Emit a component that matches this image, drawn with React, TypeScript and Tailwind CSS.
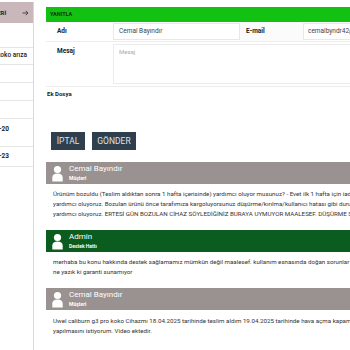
import React from "react";

function UserIcon() {
  return (
    <svg width="11" height="17" viewBox="0 0 11 17" className="shrink-0">
      <circle cx="5.5" cy="4.5" r="3.6" fill="#ffffff" />
      <path d="M0.3 16.5 V12.6 C0.3 10 2.5 8.6 5.5 8.6 C8.5 8.6 10.7 10 10.7 12.6 V16.5 Z" fill="#ffffff" />
    </svg>
  );
}

function MsgHeader({ name, role, bg }: { name: string; role: string; bg: string }) {
  return (
    <div className={`flex items-center h-[22px] pl-[6px] gap-[6px] ${bg}`}>
      <UserIcon />
      <div className="flex flex-col leading-none">
        <span className="text-[8px] text-white">{name}</span>
        <span className="text-[5px] font-bold text-white mt-[3px]">{role}</span>
      </div>
    </div>
  );
}

export default function App() {
  const font = { fontFamily: "Roboto, 'Noto Sans', sans-serif" };
  return (
    <div className="w-[350px] h-[350px] overflow-hidden bg-white flex" style={font}>
      {/* sidebar */}
      <div className="w-[200px] ml-[-166px] shrink-0 pt-[2px] flex flex-col">
        <div className="border-r border-[#d9d9d9] flex flex-col">
          <div className="h-[21px] bg-[#c9b7bb] flex items-center justify-between pl-[142px] pr-[4px]">
            <span className="text-[6px] font-bold text-[#222]">TALEPLERİ</span>
            <svg width="7" height="6" viewBox="0 0 7 6">
              <path d="M0.5 3 H6 M3.8 0.8 L6 3 L3.8 5.2" stroke="#3a3a3a" strokeWidth="0.9" fill="none" />
            </svg>
          </div>
          <div className="h-[25px] border-b border-[#e6e6e6]" />
          <div className="h-[17px] border-b border-[#e6e6e6] flex items-center justify-end pr-[6px]">
            <span className="text-[6.5px] text-[#222] whitespace-nowrap font-medium">Uwel caliburn g3 pro koko arıza</span>
          </div>
          <div className="h-[18px] border-b border-[#e6e6e6]" />
          <div className="h-[18px] border-b border-[#e6e6e6]" />
          <div className="h-[18px] border-b border-[#e6e6e6]" />
          <div className="h-[28px] border-b border-[#e6e6e6] flex items-start pt-[6px] justify-end pr-[24px]">
            <span className="text-[6.5px] text-[#222] font-bold whitespace-nowrap">2025-04-20</span>
          </div>
          <div className="h-[20px] border-b border-[#e6e6e6] flex items-start pt-[5px] justify-end pr-[24px]">
            <span className="text-[6.5px] text-[#222] font-bold whitespace-nowrap">2025-04-23</span>
          </div>
          <div className="h-[183px]" />
        </div>
      </div>

      {/* main */}
      <div className="w-[440px] shrink-0 ml-[12px] pt-[7px] flex flex-col">
        <div className="h-[15px] bg-[#12c112] flex items-center pl-[4px]">
          <span className="text-[5.5px] font-bold text-[#13330f]">YANITLA</span>
        </div>

        {/* form */}
        <div className="flex h-[20px] border-b border-[#eeeeee] items-stretch">
          <div className="w-[67px] flex items-center pl-[11px]">
            <span className="text-[6.5px] font-bold text-[#222]">Adı</span>
          </div>
          <div className="w-[127px] py-[1px]">
            <div className="h-full border border-[#e8e8e8] flex items-center pl-[5px]">
              <span className="text-[6.5px] text-[#444]">Cemal Bayındır</span>
            </div>
          </div>
          <div className="w-[63px] flex items-center pl-[6px] bg-[#fbfbfb]">
            <span className="text-[6.5px] font-bold text-[#222]">E-mail</span>
          </div>
          <div className="flex-1 py-[1px]">
            <div className="h-full border border-[#e8e8e8] flex items-center pl-[4px]">
              <span className="text-[6.5px] text-[#444]">cemalbyndr42@gmail.com</span>
            </div>
          </div>
        </div>
        <div className="flex h-[45px] border-b border-[#eeeeee]">
          <div className="w-[67px] pl-[11px] pt-[6px] text-[6.5px] leading-none font-bold text-[#222]">
            Mesaj
          </div>
          <div className="flex-1 py-[2px]">
            <div className="h-full border border-[#ececec] pl-[5px] pt-[4px] text-[6px] leading-none text-[#aaaaaa]">
              Mesaj
            </div>
          </div>
        </div>
        <div className="h-[10px] flex items-end pl-[1px]">
          <span className="text-[6px] font-bold text-[#222] leading-none">Ek Dosya</span>
        </div>

        {/* buttons */}
        <div className="flex gap-[7px] pl-[5px] pt-[35px]">
          <div className="w-[34px] h-[18px] bg-[#2f3f4d] flex items-center justify-center">
            <span className="text-[8.5px] text-[#dde4ea]">İPTAL</span>
          </div>
          <div className="w-[44px] h-[18px] bg-[#2f3f4d] flex items-center justify-center">
            <span className="text-[8.5px] text-[#dde4ea]">GÖNDER</span>
          </div>
        </div>

        {/* messages */}
        <div className="mt-[12px] flex flex-col">
          <MsgHeader name="Cemal Bayındır" role="Müşteri" bg="bg-[#9a9191]" />
          <div className="pl-[7px] pt-[5px] pb-[11px] text-[6.2px] leading-[10px] text-[#333] whitespace-nowrap">
            Ürünüm bozuldu (Teslim aldıktan sonra 1 hafta içerisinde) yardımcı oluyor musunuz? - Evet ilk 1 hafta için iade<br />
            yardımcı oluyoruz. Bozulan ürünü önce tarafımıza kargoluyorsunuz düşürme/kırılma/kullanıcı hatası gibi durumlar<br />
            yardımcı oluyoruz. ERTESİ GÜN BOZULAN CİHAZ SÖYLEDİĞİNİZ BURAYA UYMUYOR MAALESEF. DÜŞÜRME SONUCU
          </div>
          <MsgHeader name="Admin" role="Destek Hattı" bg="bg-[#0b5c1f]" />
          <div className="pl-[7px] pt-[5px] pb-[11px] text-[6.2px] leading-[10px] text-[#333] whitespace-nowrap">
            merhaba bu konu hakkında destek sağlamamız mümkün değil maalesef. kullanım esnasında doğan sorunlar için<br />
            ne yazık ki garanti sunamıyor
          </div>
          <MsgHeader name="Cemal Bayındır" role="Müşteri" bg="bg-[#9a9191]" />
          <div className="pl-[7px] pt-[6px] pb-[11px] text-[6.2px] leading-[10px] text-[#333] whitespace-nowrap">
            Uwel caliburn g3 pro koko Cihazmı 18.04.2025 tarihinde teslim aldım 19.04.2025 tarihinde hava açma kapama<br />
            yapılmasını istiyorum. Video ektedir.
          </div>
        </div>
      </div>
    </div>
  );
}
